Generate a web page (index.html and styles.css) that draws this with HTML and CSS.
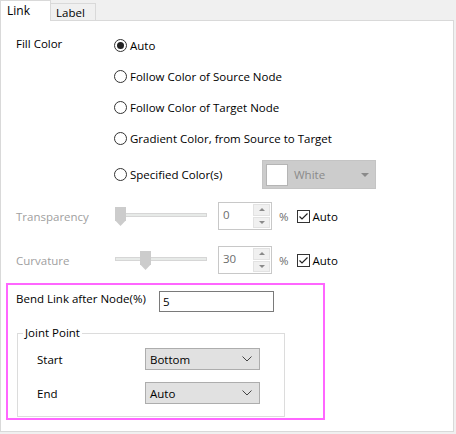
FILE: index.html
```html
<!DOCTYPE html>
<html>
<head>
<meta charset="utf-8">
<link rel="stylesheet" href="styles.css">
</head>
<body>
<div class="tabs">
  <div class="tab active">Link</div>
  <div class="tab">Label</div>
</div>
<div class="panel">
  <div class="top">
    <div class="fill">
      <div class="fill-label">Fill Color</div>
      <div class="options">
        <div class="opt"><span class="radio on"></span><span>Auto</span></div>
        <div class="opt"><span class="radio"></span><span>Follow Color of Source Node</span></div>
        <div class="opt"><span class="radio"></span><span>Follow Color of Target Node</span></div>
        <div class="opt"><span class="radio"></span><span>Gradient Color, from Source to Target</span></div>
        <div class="opt spec"><span class="radio"></span><span class="spec-text">Specified Color(s)</span>
          <div class="colorbox"><span class="swatch"></span><span class="color-name">White</span><span class="tri"></span></div>
        </div>
      </div>
    </div>
    <div class="srow first">
      <div class="slabel">Transparency</div>
      <div class="slider"><div class="track"></div><div class="thumb" style="left:0px"></div></div>
      <div class="spin"><span class="spin-val">0</span><div class="spin-btns"><span class="up"></span><span class="down"></span></div></div>
      <span class="pct">%</span>
      <span class="check"><svg width="11" height="11" viewBox="0 0 11 11"><path d="M1.5 5.5 L4 8 L9.5 2.5" fill="none" stroke="#222" stroke-width="1.2"/></svg></span>
      <span class="auto">Auto</span>
    </div>
    <div class="srow second">
      <div class="slabel">Curvature</div>
      <div class="slider"><div class="track"></div><div class="thumb" style="left:25px"></div></div>
      <div class="spin"><span class="spin-val">30</span><div class="spin-btns"><span class="up"></span><span class="down"></span></div></div>
      <span class="pct">%</span>
      <span class="check"><svg width="11" height="11" viewBox="0 0 11 11"><path d="M1.5 5.5 L4 8 L9.5 2.5" fill="none" stroke="#222" stroke-width="1.2"/></svg></span>
      <span class="auto">Auto</span>
    </div>
  </div>
  <div class="bend">
    <div class="bend-row">
      <div class="bend-label">Bend Link after Node(%)</div>
      <div class="textbox">5</div>
    </div>
    <fieldset class="group">
      <legend>Joint Point</legend>
      <div class="grow">
        <div class="glabel">Start</div>
        <div class="select"><span>Bottom</span><svg width="10" height="6" viewBox="0 0 10 6"><path d="M0.5 0.5 L5 5 L9.5 0.5" fill="none" stroke="#444" stroke-width="1"/></svg></div>
      </div>
      <div class="grow">
        <div class="glabel">End</div>
        <div class="select"><span>Auto</span><svg width="10" height="6" viewBox="0 0 10 6"><path d="M0.5 0.5 L5 5 L9.5 0.5" fill="none" stroke="#444" stroke-width="1"/></svg></div>
      </div>
    </fieldset>
  </div>
</div>
</body>
</html>
```

FILE: styles.css
```css
* { box-sizing: border-box; }
html, body { margin: 0; padding: 0; }
body {
  background: #f0f0f0;
  width: 456px;
  height: 434px;
  font-family: "Open Sans", "Liberation Sans", sans-serif;
  font-size: 11.5px;
  color: #000;
  overflow: hidden;
}
.tabs {
  display: flex;
  align-items: flex-end;
  height: 20px;
}
.tab {
  width: 45px;
  height: 17px;
  border: 1px solid #d9d9d9;
  border-bottom: none;
  border-left: none;
  padding-left: 5px;
  line-height: 17px;
  background: #f0f0f0;
}
.tab.active {
  width: 51px;
  height: 21px;
  margin-bottom: -1px;
  background: #fff;
  border-left: 1px solid #d9d9d9;
  padding-left: 6px;
  line-height: 19px;
  font-size: 12px;
  position: relative;
  z-index: 1;
}
.panel {
  width: 454px;
  height: 412px;
  border: 1px solid #d9d9d9;
  background: #fff;
}
.top { padding: 9px 0 0 15px; }
.fill { display: flex; }
.fill-label { width: 98px; line-height: 28px; }
.options { display: flex; flex-direction: column; }
.opt {
  height: 31px;
  display: flex;
  align-items: center;
  gap: 3px;
}
.opt.spec { height: 29px; margin-top: 6px; }
.radio {
  width: 13px;
  height: 13px;
  border: 1px solid #333;
  border-radius: 50%;
  background: #fff;
  display: flex;
  align-items: center;
  justify-content: center;
  flex: none;
}
.radio.on::after {
  content: "";
  width: 7px;
  height: 7px;
  border-radius: 50%;
  background: #222;
}
.spec-text { width: 129px; }
.colorbox {
  width: 114px;
  height: 29px;
  background: #cccccc;
  border: 1px solid #c4c4c4;
  display: flex;
  align-items: center;
  padding-left: 3px;
}
.swatch {
  width: 22px;
  height: 22px;
  background: #fff;
  border: 1px solid #b5b5b5;
}
.color-name { color: #8a8a8a; margin-left: 6px; flex: 1; }
.tri {
  width: 0; height: 0;
  border-left: 4px solid transparent;
  border-right: 4px solid transparent;
  border-top: 4px solid #8a8a8a;
  margin-right: 6px;
}
.srow {
  display: flex;
  align-items: center;
  height: 28px;
}
.srow.first { margin-top: 13px; }
.srow.second { margin-top: 16px; }
.slabel { width: 99px; color: #a0a0a0; }
.slider { width: 92px; height: 22px; position: relative; margin-right: 11px; }
.track {
  position: absolute;
  left: 0; right: 0; top: 8px;
  height: 4px;
  background: #e7eae8;
  border: 1px solid #d6d6d6;
}
.thumb {
  position: absolute;
  top: 2px;
  width: 11px;
  height: 19px;
  background: #cccccc;
  clip-path: polygon(0 0, 100% 0, 100% 70%, 50% 100%, 0 70%);
}
.spin {
  width: 54px;
  height: 28px;
  border: 1px solid #c8c8c8;
  display: flex;
  justify-content: space-between;
  padding: 1px;
}
.spin-val { color: #6d6d6d; padding: 3px 0 0 3px; }
.spin-btns {
  width: 17px;
  display: flex;
  flex-direction: column;
  gap: 1px;
}
.spin-btns span {
  flex: 1;
  background: #f0f0f0;
  border: 1px solid #e2e2e2;
  display: flex;
  align-items: center;
  justify-content: center;
}
.spin-btns .up::after {
  content: "";
  border-left: 3px solid transparent;
  border-right: 3px solid transparent;
  border-bottom: 3px solid #8a8a8a;
}
.spin-btns .down::after {
  content: "";
  border-left: 3px solid transparent;
  border-right: 3px solid transparent;
  border-top: 3px solid #8a8a8a;
}
.pct { color: #6d6d6d; margin-left: 7px; }
.check {
  width: 13px;
  height: 13px;
  border: 1px solid #333;
  margin-left: 8px;
  display: flex;
  align-items: center;
  justify-content: center;
}
.auto { margin-left: 3px; }
.bend {
  margin: 9px 0 0 5px;
  width: 319px;
  height: 137px;
  border: 2px solid #ff66ff;
  padding: 6px 0 0 8px;
}
.bend-row { display: flex; align-items: flex-start; }
.bend-label { width: 143px; line-height: 14px; padding-top: 1px; }
.textbox {
  width: 115px;
  height: 21px;
  border: 1px solid #7a7a7a;
  padding: 2px 0 0 3px;
}
.group {
  margin: 13px 0 0 1px;
  width: 268px;
  border: 1px solid #dcdcdc;
  padding: 7px 0 12px 19px;
  min-width: 0;
}
.group legend {
  padding: 0 2px;
  margin-left: -14px;
  line-height: 16px;
}
.grow { display: flex; align-items: center; height: 22px; }
.grow + .grow { margin-top: 12px; }
.glabel { width: 108px; }
.select {
  width: 115px;
  height: 22px;
  background: #e1e1e1;
  border: 1px solid #adadad;
  display: flex;
  align-items: center;
  justify-content: space-between;
  padding: 0 7px 0 4px;
}
```
